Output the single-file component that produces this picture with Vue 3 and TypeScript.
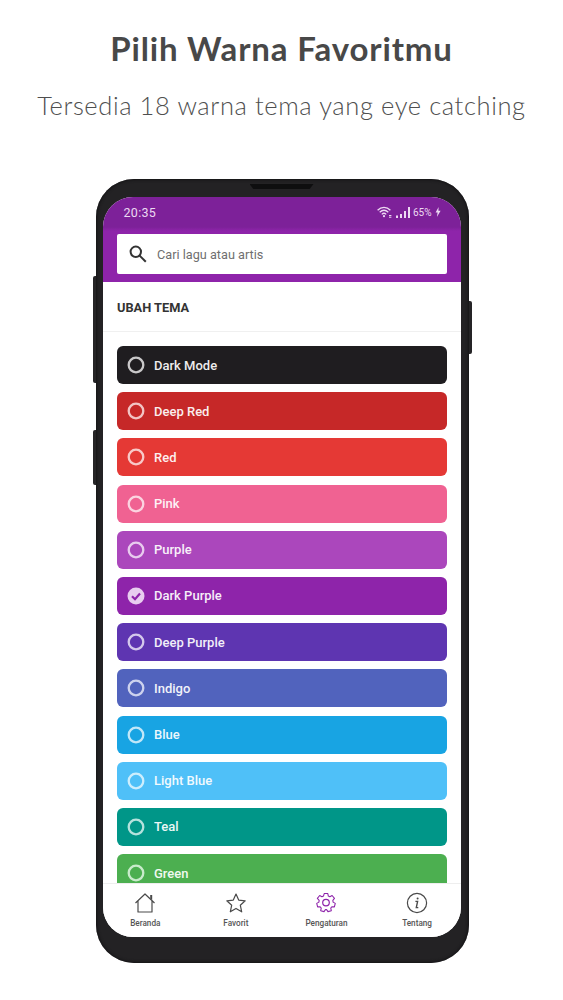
<script setup lang="ts">
interface Theme { name: string; bg: string; ring: string; checked?: boolean }
const themes: Theme[] = [
  { name: 'Dark Mode', bg: '#1f1d20', ring: '#c9c8c9' },
  { name: 'Deep Red', bg: '#c62828', ring: '#f2c4c4' },
  { name: 'Red', bg: '#e53935', ring: '#f8c9c8' },
  { name: 'Pink', bg: '#f06292', ring: '#fbd3e0' },
  { name: 'Purple', bg: '#ab47bc', ring: '#e8cbee' },
  { name: 'Dark Purple', bg: '#8e24aa', ring: '#e8cdef', checked: true },
  { name: 'Deep Purple', bg: '#5e35b1', ring: '#d4c8ec' },
  { name: 'Indigo', bg: '#5163bd', ring: '#cdd2ee' },
  { name: 'Blue', bg: '#18a4e3', ring: '#c1e7f8' },
  { name: 'Light Blue', bg: '#4fc0f8', ring: '#cdeefd' },
  { name: 'Teal', bg: '#009688', ring: '#b5e2dd' },
  { name: 'Green', bg: '#4caf50', ring: '#c9ebcb' },
]
</script>

<template>
  <main class="page">
    <h1 class="title">Pilih Warna Favoritmu</h1>
    <p class="subtitle">Tersedia 18 warna tema yang eye catching</p>

    <div class="phone">
      <span class="side left-a"></span>
      <span class="side left-b"></span>
      <span class="side right-a"></span>
      <span class="speaker"></span>

      <div class="screen">
        <header class="app-head">
          <div class="status">
            <span class="clock">20:35</span>
            <div class="status-right">
              <svg width="15" height="12" viewBox="0 0 15 12" fill="none" stroke="#ecd9f2" stroke-width="1.3">
                <path d="M.6 4.2C4.3 .4 9.7 .4 13.4 4.2" />
                <path d="M2.7 6.3C5.3 3.8 8.7 3.8 11.3 6.3" />
                <path d="M4.8 8.4C6.2 7 7.8 7 9.2 8.4" />
                <circle cx="7" cy="10.2" r="1.1" fill="#ecd9f2" stroke="none" />
                <path d="M12 9.5h2.4M12 11.2h2.4" stroke-width="1" />
              </svg>
              <svg class="bars" width="14" height="11" viewBox="0 0 14 11" fill="#ecd9f2">
                <rect x="0" y="8.5" width="2" height="2.5" />
                <rect x="4" y="7" width="2" height="4" />
                <rect x="8" y="4" width="2" height="7" />
                <rect x="12" y="0" width="2" height="11" />
              </svg>
              <span class="battery">65%</span>
              <svg width="6" height="10" viewBox="0 0 6 10" fill="#ecd9f2"><path d="M3.6 0 .6 5.6h2L1.9 10 5.6 3.8H3.4Z" /></svg>
            </div>
          </div>
          <div class="search">
            <svg width="20" height="20" viewBox="0 0 20 20" fill="none" stroke="#333" stroke-width="2">
              <circle cx="7.8" cy="7.8" r="5.2" />
              <path d="m11.6 11.6 6.2 6.2" />
            </svg>
            <span>Cari lagu atau artis</span>
          </div>
        </header>

        <div class="section">UBAH TEMA</div>

        <div class="list">
          <div v-for="t in themes" :key="t.name" class="row" :style="{ background: t.bg }">
            <svg v-if="t.checked" width="18" height="18" viewBox="0 0 18 18">
              <circle cx="9" cy="9" r="8.5" :fill="t.ring" />
              <path d="m5 9.2 3 3 5-5.6" fill="none" :stroke="t.bg" stroke-width="2.2" />
            </svg>
            <svg v-else width="18" height="18" viewBox="0 0 18 18">
              <circle cx="9" cy="9" r="7.3" fill="none" :stroke="t.ring" stroke-width="2.3" />
            </svg>
            <span class="row-name">{{ t.name }}</span>
          </div>
        </div>

        <nav class="nav">
          <div class="nav-item">
            <svg width="22" height="22" viewBox="0 0 22 22" fill="none" stroke="#4a4a4a" stroke-width="1.2">
              <path d="M1.5 11 11 2l9.5 9M4 9v11h14V9" stroke-linejoin="round" />
              <path d="M16.2 3v3.4l2 1.9V3Z" fill="#4a4a4a" stroke="none" />
            </svg>
            <span>Beranda</span>
          </div>
          <div class="nav-item">
            <svg width="22" height="22" viewBox="0 0 22 22" fill="none" stroke="#4a4a4a" stroke-width="1.2">
              <path d="m11 2 2.7 6.1 6.5.7-4.9 4.4 1.4 6.6L11 16.4l-5.7 3.4 1.4-6.6-4.9-4.4 6.5-.7Z" stroke-linejoin="round" />
            </svg>
            <span>Favorit</span>
          </div>
          <div class="nav-item">
            <svg width="22" height="22" viewBox="0 0 22 22" fill="none" stroke="#8e24aa" stroke-width="1.2">
              <path d="M9 1.5h4l.6 2.8 1.7.8 2.5-1.4 2.6 3.2-1.8 2.2.3 1.9 2.4 1.4-1 3.9-2.8-.1-1.2 1.5.6 2.8-3.7 1.1-1.6-2.3h-1.2l-1.6 2.3-3.7-1.1.6-2.8-1.2-1.5-2.8.1-1-3.9 2.4-1.4.3-1.9L1.4 6.9 4 3.7l2.5 1.4 1.7-.8Z" stroke-linejoin="round" transform="translate(1.1 .2) scale(.9)" />
              <circle cx="11" cy="10.6" r="3.3" />
            </svg>
            <span>Pengaturan</span>
          </div>
          <div class="nav-item">
            <svg width="22" height="22" viewBox="0 0 22 22" fill="none" stroke="#4a4a4a" stroke-width="1.2">
              <circle cx="11" cy="11" r="9.6" />
              <path d="M9.4 9.4h2.2L10.3 15.6h2" stroke-width="1.4" />
              <circle cx="11.6" cy="6.4" r="1" fill="#4a4a4a" stroke="none" />
            </svg>
            <span>Tentang</span>
          </div>
        </nav>
      </div>
    </div>
  </main>
</template>

<style>
html, body { background: #fff; }
</style>

<style scoped>
.page {
  width: 563px;
  height: 1000px;
  overflow: hidden;
  display: flex;
  flex-direction: column;
  align-items: center;
  font-family: "Lato", "Liberation Sans", sans-serif;
}
.title {
  margin: 28px 0 0;
  font-size: 33px;
  line-height: 40px;
  font-weight: 700;
  letter-spacing: .85px;
  color: #484848;
}
.subtitle {
  margin: 20px 0 0;
  font-size: 25.5px;
  line-height: 34px;
  font-weight: 300;
  letter-spacing: .6px;
  color: #4f4f4f;
}
.phone {
  position: relative;
  margin: 57px 0 0 1px;
  width: 373px;
  height: 784px;
  box-sizing: border-box;
  padding: 18px 8px 26px 7px;
  background: #232224;
  border-radius: 38px;
  box-shadow: inset 0 0 3px 1px #141315;
}
.side {
  position: absolute;
  width: 3px;
  background: #252426;
  border-radius: 2px 0 0 2px;
}
.left-a { left: -3px; top: 97px; height: 107px; }
.left-b { left: -3px; top: 251px; height: 55px; }
.right-a { right: -3px; top: 122px; height: 53px; border-radius: 0 2px 2px 0; }
.speaker {
  position: absolute;
  left: 154px;
  top: 5px;
  width: 64px;
  height: 5px;
  background: #0e0e0f;
  clip-path: polygon(0 0, 100% 0, 94% 100%, 6% 100%);
}
.screen {
  height: 740px;
  display: flex;
  flex-direction: column;
  overflow: hidden;
  background: #fff;
  border-radius: 30px;
}
.app-head {
  flex: none;
  height: 85px;
  box-sizing: border-box;
  padding: 0 14px;
  background: linear-gradient(#7d2199 0 30px, #8e24aa 34px);
}
.status {
  height: 37px;
  padding: 0 6px 7px 7px;
  box-sizing: border-box;
  display: flex;
  align-items: center;
  justify-content: space-between;
  color: #ecd9f2;
  font-family: "Roboto", sans-serif;
}
.clock { font-size: 12.5px; letter-spacing: .3px; }
.status-right { display: flex; align-items: center; gap: 3px; }
.bars { margin-left: 1px; }
.battery { font-size: 10px; }
.search {
  height: 40px;
  display: flex;
  align-items: center;
  gap: 9.5px;
  padding-left: 11px;
  background: #fff;
  border-radius: 2px;
  font-family: "Roboto", sans-serif;
  font-size: 12.7px;
  color: #6f6f6f;
}
.section {
  flex: none;
  height: 50px;
  box-sizing: border-box;
  padding: 1px 0 0 14.5px;
  display: flex;
  align-items: center;
  border-bottom: 1px solid #f0f0f0;
  font-family: "Roboto", sans-serif;
  font-size: 12.8px;
  font-weight: 700;
  color: #333;
}
.list {
  flex: 1;
  min-height: 0;
  overflow: hidden;
  box-sizing: border-box;
  padding: 14px 14px 0;
  display: flex;
  flex-direction: column;
  gap: 8.2px;
}
.row {
  flex: none;
  height: 38px;
  padding-left: 10px;
  display: flex;
  align-items: center;
  gap: 9.5px;
  border-radius: 6px;
}
.row-name {
  font-family: "Roboto", sans-serif;
  font-size: 13px;
  font-weight: 500;
  color: #fff;
  opacity: .92;
}
.nav {
  flex: none;
  height: 54px;
  box-sizing: border-box;
  padding-top: 8px;
  margin-left: -2.5px;
  display: grid;
  grid-template-columns: repeat(4, 90.6px);
  background: #fff;
  border-top: 1px solid #eee;
}
.nav-item {
  display: flex;
  flex-direction: column;
  align-items: center;
  gap: 4px;
  font-family: "Roboto", sans-serif;
  font-size: 8.2px;
  line-height: 10px;
  font-weight: 500;
  color: #555;
}
</style>
